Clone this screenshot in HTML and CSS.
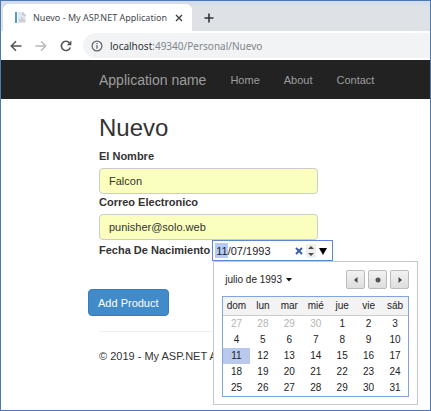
FILE: index.html
```html
<!DOCTYPE html>
<html lang="es">
<head>
<meta charset="utf-8">
<title>Nuevo - My ASP.NET Application</title>
<link rel="stylesheet" href="styles.css">
</head>
<body>
<div class="window">
  <div class="tabstrip">
    <div class="tab">
      <svg class="favicon" width="13" height="13" viewBox="0 0 13 13"><path d="M1 1h2v11H1z" fill="#4f9fc4"/><path d="M4 1h5l3 3v8H4z" fill="#e3e6ea"/><path d="M9 1v3h3M6 11V8M8 11V6M10 11V8" fill="none" stroke="#b5bbc2"/></svg>
      <span class="tab-title">Nuevo - My ASP.NET Application</span>
      <button class="icon-btn" type="button" aria-label="Close tab"><svg width="8" height="8" viewBox="0 0 8 8"><path d="M1 1l6 6M7 1L1 7" stroke="#3c4043" stroke-width="1.4"/></svg></button>
    </div>
    <button class="icon-btn new-tab" type="button" aria-label="New tab"><svg width="10" height="10" viewBox="0 0 10 10"><path d="M5 .5v9M.5 5h9" stroke="#303438" stroke-width="1.6"/></svg></button>
  </div>
  <div class="toolbar">
    <button class="icon-btn" type="button" aria-label="Back"><svg width="12" height="12" viewBox="0 0 12 12"><path d="M11.500 6H1.500M6 1.300L1.300 6 6 10.700" fill="none" stroke="#505357" stroke-width="1.500"/></svg></button>
    <button class="icon-btn" type="button" aria-label="Forward"><svg width="12" height="12" viewBox="0 0 12 12"><path d="M.5 6h10M6 1.300L10.700 6 6 10.700" fill="none" stroke="#b4b6b9" stroke-width="1.300"/></svg></button>
    <button class="icon-btn" type="button" aria-label="Reload"><svg width="12" height="12" viewBox="0 0 12 12"><path d="M10.300 7.500A4.600 4.600 0 1 1 9.500 2.900" fill="none" stroke="#505357" stroke-width="1.600"/><path d="M11.400.6v4.600H6.800z" fill="#505357"/></svg></button>
    <div class="address">
      <svg width="12" height="12" viewBox="0 0 12 12"><circle cx="6" cy="6" r="4.900" fill="none" stroke="#5f6368" stroke-width="1.200"/><path d="M6 5.200v3.600M6 3v1.300" stroke="#5f6368" stroke-width="1.300"/></svg>
      <span class="url"><span class="host">localhost</span>:49340/Personal/Nuevo</span>
    </div>
  </div>
  <nav class="navbar">
    <a class="brand" href="#">Application name</a>
    <a href="#">Home</a>
    <a href="#">About</a>
    <a href="#">Contact</a>
  </nav>
  <main class="content">
    <h1>Nuevo</h1>
    <form>
      <label for="nombre">El Nombre</label>
      <input class="text-field" id="nombre" type="text" value="Falcon">
      <label for="correo">Correo Electronico</label>
      <input class="text-field" id="correo" type="email" value="punisher@solo.web">
      <div class="date-row">
        <label for="fecha">Fecha De Nacimiento</label>
        <div class="date-box">
          <input id="fecha" type="text" value="11/07/1993">
          <button class="icon-btn" type="button" aria-label="Borrar"><svg width="8" height="8" viewBox="0 0 8 8"><path d="M1 1l6 6M7 1L1 7" stroke="#3b5fa5" stroke-width="2"/></svg></button>
          <button class="icon-btn spin" type="button" aria-label="Cambiar"><svg width="10" height="14" viewBox="0 0 10 14"><path d="M5 2l3 3H2zM5 12l3-3H2z" fill="#4b4b4b"/></svg></button>
          <button class="icon-btn" type="button" aria-label="Abrir calendario"><svg width="8" height="8" viewBox="0 0 8 8"><path d="M0 1h8L4 8z" fill="#000"/></svg></button>
          <div class="calendar">
            <div class="cal-head">
              <button class="month" type="button">julio de 1993 <svg width="6" height="4" viewBox="0 0 6 4"><path d="M0 0h6L3 3.500z" fill="#111"/></svg></button>
              <button class="cal-btn" type="button" aria-label="Mes anterior"><svg width="4" height="6" viewBox="0 0 4 6"><path d="M3.500 0v6L0 3z" fill="#444"/></svg></button>
              <button class="cal-btn" type="button" aria-label="Hoy"><svg width="6" height="6" viewBox="0 0 6 6"><circle cx="3" cy="3" r="2.500" fill="#555"/></svg></button>
              <button class="cal-btn" type="button" aria-label="Mes siguiente"><svg width="4" height="6" viewBox="0 0 4 6"><path d="M.5 0v6L4 3z" fill="#444"/></svg></button>
            </div>
            <table>
              <thead><tr><th>dom</th><th>lun</th><th>mar</th><th>mié</th><th>jue</th><th>vie</th><th>sáb</th></tr></thead>
              <tbody>
                <tr><td class="out">27</td><td class="out">28</td><td class="out">29</td><td class="out">30</td><td>1</td><td>2</td><td>3</td></tr>
                <tr><td>4</td><td>5</td><td>6</td><td>7</td><td>8</td><td>9</td><td>10</td></tr>
                <tr><td class="selected">11</td><td>12</td><td>13</td><td>14</td><td>15</td><td>16</td><td>17</td></tr>
                <tr><td>18</td><td>19</td><td>20</td><td>21</td><td>22</td><td>23</td><td>24</td></tr>
                <tr><td>25</td><td>26</td><td>27</td><td>28</td><td>29</td><td>30</td><td>31</td></tr>
              </tbody>
            </table>
          </div>
        </div>
      </div>
      <button class="submit" type="submit">Add Product</button>
    </form>
    <footer>© 2019 - My ASP.NET Application</footer>
  </main>
</div>
</body>
</html>
```
FILE: styles.css
```css
* {
  box-sizing: border-box;
}

body {
  margin: 0;
  background: #fff;
  color: #333;
  font: 11px/16px "Liberation Sans", Arial, sans-serif;
}

.window {
  min-height: 100vh;
  border: 1px solid #4a7ab8;
  overflow: hidden;
}

button,
input {
  margin: 0;
  font: inherit;
  color: inherit;
}

svg {
  display: block;
  flex: none;
}

.icon-btn {
  display: flex;
  flex: none;
  padding: 0;
  border: 0;
  background: none;
}

.tabstrip {
  display: flex;
  align-items: center;
  height: 30px;
  padding: 3px 0 0 2px;
  background: linear-gradient(#d0dcf3, #dee1e6 6px);
}

.tab {
  display: flex;
  align-items: center;
  align-self: stretch;
  width: 189px;
  padding: 0 9px 0 11px;
  border-radius: 6px 6px 0 0;
  background: #fff;
}

.tab-title {
  flex: 1;
  margin-left: 6px;
  color: #45494d;
  font: 9px/14px "Noto Sans", "Open Sans", sans-serif;
  white-space: nowrap;
}

.new-tab {
  margin-left: 12px;
}

.toolbar {
  display: flex;
  align-items: center;
  gap: 13px;
  height: 29px;
  padding: 2px 0 2px 9px;
  background: #fff;
}

.address {
  display: flex;
  flex: 1;
  align-items: center;
  align-self: stretch;
  gap: 7px;
  margin-left: -2px;
  padding-left: 8px;
  border-radius: 13px 0 0 13px;
  background: #f1f3f4;
}

.url {
  color: #80868b;
  font: 10px/16px "Noto Sans", "Open Sans", sans-serif;
}

.host {
  color: #303336;
}

.navbar {
  display: flex;
  align-items: center;
  gap: 24px;
  height: 39px;
  padding-left: 98px;
  background: #222;
}

.navbar a {
  color: #9d9d9d;
  text-decoration: none;
}

.navbar .brand {
  font-size: 14px;
}

.content {
  padding: 15px 13px 0 98px;
}

h1 {
  margin: 0 0 6px;
  font-size: 24px;
  font-weight: 400;
  line-height: 28px;
}

label {
  display: block;
  font-weight: 700;
  line-height: 17px;
}

.text-field {
  display: block;
  width: 219px;
  height: 26px;
  margin: 3px 0 0;
  padding: 0 9px;
  border: 1px solid #ccc;
  border-radius: 4px;
  background: #faffbd;
}

.date-row {
  display: flex;
  align-items: center;
  gap: 2px;
}

.date-box {
  position: relative;
  display: flex;
  align-items: center;
  gap: 3px;
  width: 121px;
  height: 21px;
  padding: 0 5px 0 2px;
  border: 1px solid #5c86d8;
}

.date-box > input {
  flex: 1;
  min-width: 0;
  height: 15px;
  padding: 0 1px;
  border: 0;
  outline: 0;
  background: linear-gradient(#b3cbf6, #b3cbf6) no-repeat left / 13px 15px;
  color: #222;
}

.spin {
  border-radius: 2px;
  background: #eee;
}

.calendar {
  position: absolute;
  top: 20px;
  left: 0;
  width: 205px;
  padding: 8px 8px 7px;
  border: 1px solid #c4c8cf;
  background: #fff;
  color: #222;
}

.cal-head {
  display: flex;
  align-items: center;
  gap: 3px;
  margin-bottom: 7px;
}

.month {
  display: flex;
  align-items: center;
  gap: 4px;
  margin-right: auto;
  padding: 0 3px;
  border: 0;
  background: none;
  font-size: 10px;
}

.cal-btn {
  display: flex;
  align-items: center;
  justify-content: center;
  width: 19px;
  height: 19px;
  padding: 0;
  border: 1px solid #bbb;
  border-radius: 2px;
  background: linear-gradient(#f2f2f2, #dedede);
}

table {
  width: 100%;
  border: 1px solid #7fa6e0;
  border-spacing: 0;
  table-layout: fixed;
  font-size: 10px;
  line-height: 16px;
  text-align: center;
}

th {
  height: 19px;
  padding: 0;
  border-bottom: 1px solid #ccc;
  background: #f3f3f3;
  font-weight: 400;
}

td {
  padding: 0;
}

.out {
  color: #b5b5b5;
}

.selected {
  background: #b9c9ee;
}

.submit {
  height: 27px;
  margin: 28px 0 0 -11px;
  padding: 0 9px;
  border: 1px solid #357ebd;
  border-radius: 4px;
  background: #428bca;
  color: #fff;
}

footer {
  margin-top: 15px;
  padding-top: 16px;
  border-top: 1px solid #eee;
}
```
